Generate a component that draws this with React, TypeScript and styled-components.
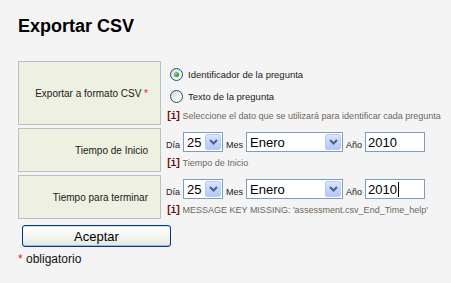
import styled, { createGlobalStyle } from "styled-components";

const GlobalStyle = createGlobalStyle`
  html, body {
    margin: 0;
    padding: 0;
    background: #f4f4f4;
  }
  body {
    font-family: "Liberation Sans", Arial, sans-serif;
    color: #1b1b1b;
  }
`;

type DateRow = {
  label: string;
  help: string;
  caret?: boolean;
};

const dateRows: DateRow[] = [
  { label: "Tiempo de Inicio", help: "Tiempo de Inicio" },
  {
    label: "Tiempo para terminar",
    help: "MESSAGE KEY MISSING: 'assessment.csv_End_Time_help'",
    caret: true,
  },
];

function Chevron() {
  return (
    <svg width="9" height="6" viewBox="0 0 9 6">
      <polyline points="1,1 4.5,4.5 8,1" fill="none" stroke="#4d6185" strokeWidth="2" />
    </svg>
  );
}

function FakeSelect({ value, width }: { value: string; width: number }) {
  return (
    <Select $width={width}>
      <SelectValue>{value}</SelectValue>
      <DropButton>
        <Chevron />
      </DropButton>
    </Select>
  );
}

export default function App() {
  return (
    <Page>
      <GlobalStyle />
      <Title>Exportar CSV</Title>
      <Form>
        <Row $height={64}>
          <LabelCell>
            Exportar a formato CSV&nbsp;<Required>*</Required>
          </LabelCell>
          <Field $top={2}>
            <RadioLine>
              <Radio $checked />
              <RadioText>Identificador de la pregunta</RadioText>
            </RadioLine>
            <RadioLine>
              <Radio />
              <RadioText>Texto de la pregunta</RadioText>
            </RadioLine>
            <Help $top={1}>
              <HelpIcon>[i]</HelpIcon>
              <HelpText>Seleccione el dato que se utilizará para identificar cada pregunta</HelpText>
            </Help>
          </Field>
        </Row>
        {dateRows.map((row) => (
          <Row $height={44} key={row.label}>
            <LabelCell>{row.label}</LabelCell>
            <Field $top={4}>
              <DateLine>
                <SmallLabel>Día</SmallLabel>
                <FakeSelect value="25" width={40} />
                <SmallLabel>Mes</SmallLabel>
                <FakeSelect value="Enero" width={97} />
                <SmallLabel>Año</SmallLabel>
                <TextInput>
                  2010
                  {row.caret && <Caret />}
                </TextInput>
              </DateLine>
              <Help $top={3}>
                <HelpIcon>[i]</HelpIcon>
                <HelpText>{row.help}</HelpText>
              </Help>
            </Field>
          </Row>
        ))}
      </Form>
      <SubmitButton type="button">Aceptar</SubmitButton>
      <Legend>
        <Required>*</Required> obligatorio
      </Legend>
    </Page>
  );
}

const Page = styled.div`
  width: 451px;
  height: 283px;
  padding-left: 18px;
  box-sizing: border-box;
`;

const Title = styled.h1`
  margin: 0;
  padding-top: 15px;
  font-size: 18px;
  line-height: 22px;
  font-weight: bold;
  color: #000;
`;

const Form = styled.div`
  display: flex;
  flex-direction: column;
  gap: 3px;
  margin-top: 24px;
`;

const Row = styled.div<{ $height: number }>`
  display: grid;
  grid-template-columns: 143px 1fr;
  column-gap: 5px;
  height: ${(p) => p.$height}px;
`;

const LabelCell = styled.div`
  display: flex;
  align-items: center;
  justify-content: flex-end;
  padding-right: 12px;
  box-sizing: border-box;
  background: #eef0e1;
  border: 1px solid #b6c0c5;
  font-size: 10px;
  color: #1a1a1a;
  white-space: nowrap;
`;

const Required = styled.span`
  color: #e8202a;
`;

const Field = styled.div<{ $top: number }>`
  display: flex;
  flex-direction: column;
  padding-top: ${(p) => p.$top}px;
`;

const RadioLine = styled.div`
  display: flex;
  align-items: center;
  height: 22px;
  padding-left: 4px;
  gap: 5px;
`;

const Radio = styled.span<{ $checked?: boolean }>`
  position: relative;
  width: 13px;
  height: 13px;
  box-sizing: border-box;
  border-radius: 50%;
  border: 1px solid #1c5180;
  background: linear-gradient(135deg, #d8d8d0 0%, #f4f4f0 60%, #ffffff 100%);

  &::after {
    content: "";
    display: ${(p) => (p.$checked ? "block" : "none")};
    position: absolute;
    left: 3px;
    top: 3px;
    width: 5px;
    height: 5px;
    border-radius: 50%;
    background: radial-gradient(circle at 35% 35%, #8fe08f 0%, #2aa02a 60%, #1f8a1f 100%);
  }
`;

const RadioText = styled.span`
  font-size: 9.5px;
  color: #1a1a1a;
`;

const Help = styled.div<{ $top: number }>`
  display: flex;
  align-items: center;
  height: 16px;
  margin-top: ${(p) => p.$top}px;
  gap: 3px;
  white-space: nowrap;
`;

const HelpIcon = styled.span`
  font-family: "Liberation Mono", "Courier New", monospace;
  font-weight: bold;
  font-size: 10px;
  letter-spacing: -1.5px;
  color: #6b0a0a;
`;

const HelpText = styled.span`
  font-size: 9px;
  color: #6f675d;
`;

const DateLine = styled.div`
  display: flex;
  align-items: flex-end;
  height: 20px;
  gap: 3px;
`;

const SmallLabel = styled.span`
  font-size: 9px;
  line-height: 11px;
  margin-bottom: 1px;
  color: #1a1a1a;
`;

const Select = styled.div<{ $width: number }>`
  display: flex;
  align-items: center;
  width: ${(p) => p.$width}px;
  height: 20px;
  box-sizing: border-box;
  border: 1px solid #7f9db9;
  background: #fff;
`;

const SelectValue = styled.span`
  flex: 1;
  padding-left: 3px;
  font-size: 13px;
  color: #000;
`;

const DropButton = styled.span`
  display: flex;
  align-items: center;
  justify-content: center;
  width: 16px;
  height: 16px;
  margin-right: 1px;
  box-sizing: border-box;
  border: 1px solid #b7cbf3;
  border-radius: 2px;
  background: linear-gradient(180deg, #dbe6fe 0%, #c3d5fb 50%, #b2c9f6 100%);
`;

const TextInput = styled.div`
  display: flex;
  align-items: center;
  width: 60px;
  height: 20px;
  box-sizing: border-box;
  border: 1px solid #7f9db9;
  background: #fff;
  padding-left: 2px;
  font-size: 13px;
  color: #000;
`;

const Caret = styled.span`
  width: 1px;
  height: 15px;
  background: #000;
  margin-left: 1px;
`;

const SubmitButton = styled.button`
  display: block;
  width: 149px;
  height: 22px;
  margin: 6px 0 0 4px;
  padding: 0;
  box-sizing: border-box;
  border: 1px solid #003c74;
  border-radius: 3px;
  background: linear-gradient(180deg, #ffffff 0%, #f3f3ee 60%, #e6e5dd 100%);
  box-shadow: inset 0 -1px 0 #9db7e8, inset 0 1px 0 #cfe0fb;
  font-family: "Liberation Sans", Arial, sans-serif;
  font-size: 13px;
  color: #000;
`;

const Legend = styled.div`
  margin-top: 5px;
  font-size: 12px;
  line-height: 14px;
  color: #111;
`;
